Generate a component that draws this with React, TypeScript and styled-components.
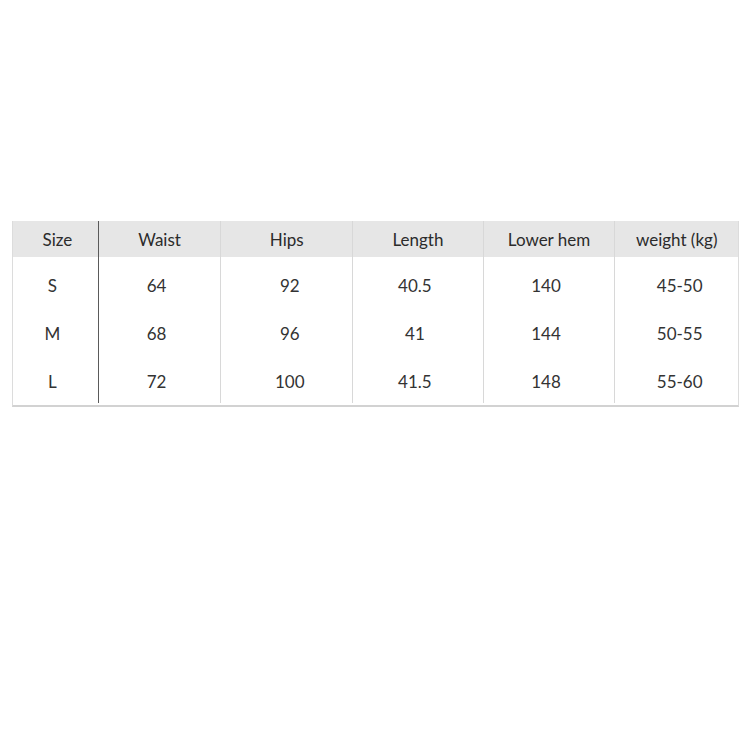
import React from 'react'
import styled, { createGlobalStyle } from 'styled-components'

const GlobalStyle = createGlobalStyle`
  body {
    margin: 0;
    background: #fff;
    font-family: Lato, "Noto Sans", sans-serif;
  }
`

const columns = [
  { title: 'Size', width: 85, values: ['S', 'M', 'L'], shift: -3 },
  { title: 'Waist', width: 123, values: ['64', '68', '72'], shift: -3 },
  { title: 'Hips', width: 132, values: ['92', '96', '100'], shift: 3 },
  { title: 'Length', width: 131, values: ['40.5', '41', '41.5'], shift: -3 },
  { title: 'Lower hem', width: 132, values: ['140', '144', '148'], shift: -3 },
  { title: 'weight (kg)', width: 124, values: ['45-50', '50-55', '55-60'], shift: 3 },
]

const App: React.FC = () => {
  return (
    <Page>
      <GlobalStyle />
      <Table>
        {columns.map((col, i) => (
          <Column key={col.title} $width={col.width} $first={i === 0} $afterSize={i === 1}>
            <HeadCell $pad={i === 0 ? 4 : 0}>{col.title}</HeadCell>
            <Body>
              {col.values.map(v => (
                <Cell key={v} $shift={col.shift}>{v}</Cell>
              ))}
            </Body>
          </Column>
        ))}
      </Table>
    </Page>
  )
}

export default App

const Page = styled.div`
  padding: 221px 0 0 12px;
`

const Table = styled.div`
  display: flex;
  width: 727px;
  border-left: 1px solid #dcdcdc;
  border-right: 1px solid #dcdcdc;
  border-bottom: 2px solid #d2d2d2;
  padding-bottom: 2px;
  box-sizing: border-box;
`

const Column = styled.div<{ $width: number; $first: boolean; $afterSize: boolean }>`
  width: ${p => p.$width}px;
  display: flex;
  flex-direction: column;
  box-sizing: border-box;
  border-left: ${p => (p.$first ? 'none' : p.$afterSize ? '1px solid #5a5a5a' : '1px solid #d8d8d8')};
`

const HeadCell = styled.div<{ $pad: number }>`
  height: 36px;
  background: #e6e6e6;
  display: flex;
  align-items: center;
  justify-content: center;
  padding-left: ${p => p.$pad}px;
  font-size: 17px;
  color: #2b2b2b;
`

const Body = styled.div`
  padding-top: 4px;
  display: flex;
  flex-direction: column;
  height: 142px;
  overflow: hidden;
`

const Cell = styled.div<{ $shift: number }>`
  flex: 0 0 48px;
  display: flex;
  align-items: center;
  justify-content: center;
  font-size: 17px;
  color: #333;
  padding-left: ${p => (p.$shift > 0 ? p.$shift * 2 : 0)}px;
  padding-right: ${p => (p.$shift < 0 ? -p.$shift * 2 : 0)}px;
`
